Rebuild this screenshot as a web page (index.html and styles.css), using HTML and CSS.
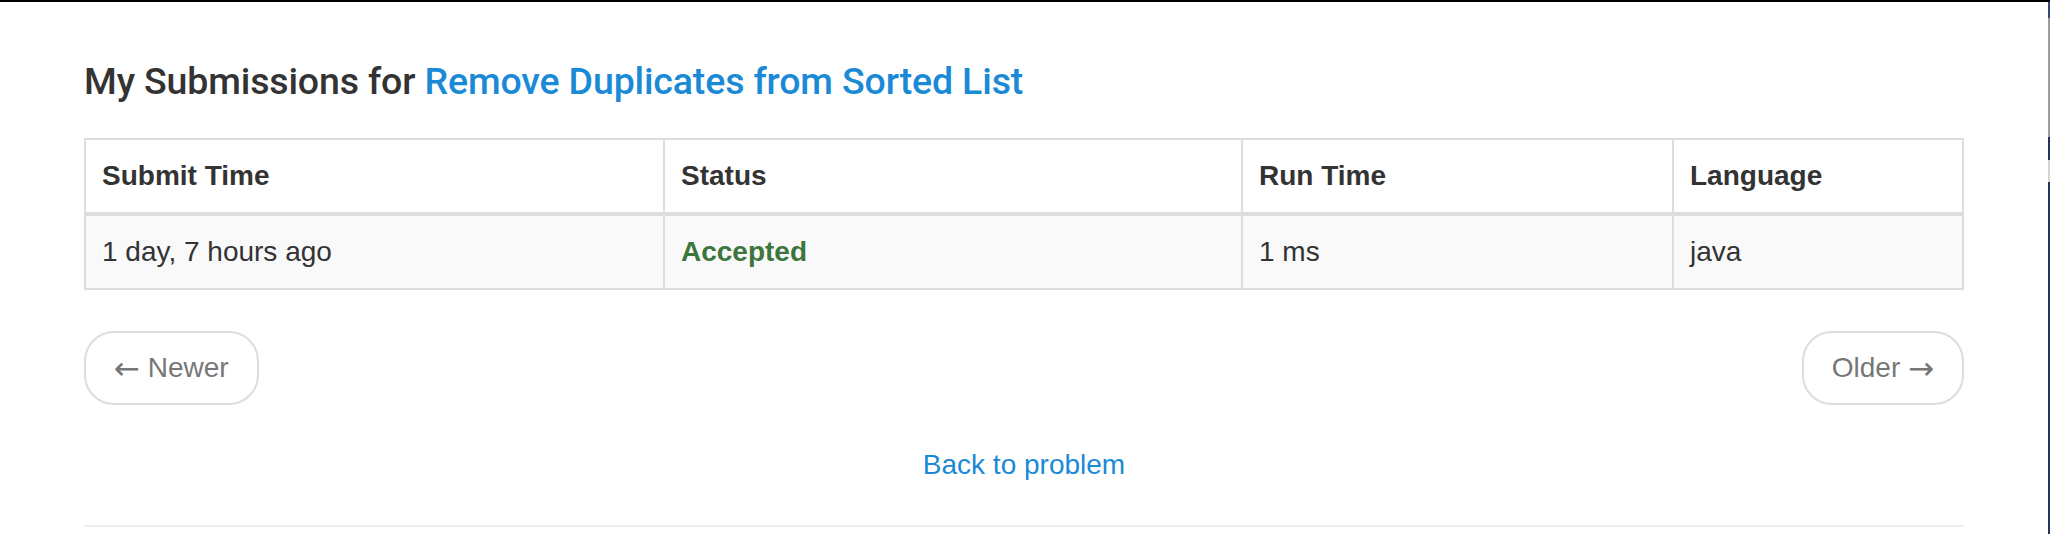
FILE: index.html
```html
<!DOCTYPE html>
<html lang="en">
<head>
<meta charset="utf-8">
<title>My Submissions</title>
<link rel="stylesheet" href="styles.css">
</head>
<body>
<div class="screen">
  <main class="page">
    <div class="container">
      <h3 class="title">My Submissions for <a class="link" href="#">Remove Duplicates from Sorted List</a></h3>
      <table class="subs">
        <colgroup>
          <col class="c-time">
          <col class="c-status">
          <col class="c-run">
          <col class="c-lang">
        </colgroup>
        <thead>
          <tr>
            <th>Submit Time</th>
            <th>Status</th>
            <th>Run Time</th>
            <th>Language</th>
          </tr>
        </thead>
        <tbody>
          <tr>
            <td>1 day, 7 hours ago</td>
            <td><a class="accepted" href="#">Accepted</a></td>
            <td>1 ms</td>
            <td>java</td>
          </tr>
        </tbody>
      </table>
      <ul class="pager">
        <li><a class="pager-btn" href="#"><span class="arrow">&larr;</span> Newer</a></li>
        <li><a class="pager-btn" href="#">Older <span class="arrow">&rarr;</span></a></li>
      </ul>
      <p class="back"><a class="link" href="#">Back to problem</a></p>
      <hr class="rule">
    </div>
  </main>
  <div class="edge"></div>
</div>
</body>
</html>
```
FILE: styles.css
```css
* { box-sizing: border-box; }
html, body { margin: 0; padding: 0; background: #fff; }
body {
  font-family: "Liberation Sans", Arial, Helvetica, sans-serif;
  color: #333;
}
.screen {
  display: flex;
  height: 534px;
  overflow: hidden;
  border-top: 2px solid #000;
}
.page { flex: 1; }
.edge {
  width: 2px;
  background: linear-gradient(to bottom, #3a4776 0, #3a4776 16px, #9c9c9c 16px, #9c9c9c 135px, #27325c 135px, #27325c 158px, #d5d5d5 158px, #d5d5d5 180px, #27325c 180px);
}
.container {
  width: 1880px;
  margin: 0 auto;
  padding-top: 59px;
}
.title {
  margin: 0 0 36px;
  font-family: Roboto, "Liberation Sans", Arial, sans-serif;
  font-size: 37.5px;
  line-height: 41px;
  font-weight: 500;
  letter-spacing: -0.15px;
  color: #333;
}
.link { color: #1a8ad6; text-decoration: none; }
.subs {
  width: 100%;
  border-collapse: collapse;
  table-layout: fixed;
  font-size: 28px;
  line-height: 40px;
}
.c-time { width: 579px; }
.c-status { width: 578px; }
.c-run { width: 431px; }
.subs th, .subs td {
  padding: 16px;
  border: 2px solid #ddd;
  text-align: left;
  vertical-align: top;
}
.subs th { font-weight: 700; color: #333; }
.subs thead th { border-bottom-width: 4px; }
.subs tbody tr { background: #f9f9f9; }
.accepted { color: #3c763d; font-weight: 700; text-decoration: none; }
.pager {
  display: flex;
  justify-content: space-between;
  list-style: none;
  margin: 41px 0 40px;
  padding: 0;
}
.pager-btn {
  display: block;
  height: 74px;
  padding: 15px 28px;
  border: 2px solid #ddd;
  border-radius: 30px;
  font-size: 28px;
  line-height: 40px;
  color: #777;
  text-decoration: none;
  background: #fff;
}
.arrow {
  font-family: "DejaVu Sans", sans-serif;
  font-size: 31px;
  line-height: 40px;
  vertical-align: top;
}
.back {
  margin: 0;
  text-align: center;
  font-size: 28px;
  line-height: 40px;
}
.rule {
  margin: 40px 0 0;
  border: 0;
  border-top: 2px solid #eee;
}
```
